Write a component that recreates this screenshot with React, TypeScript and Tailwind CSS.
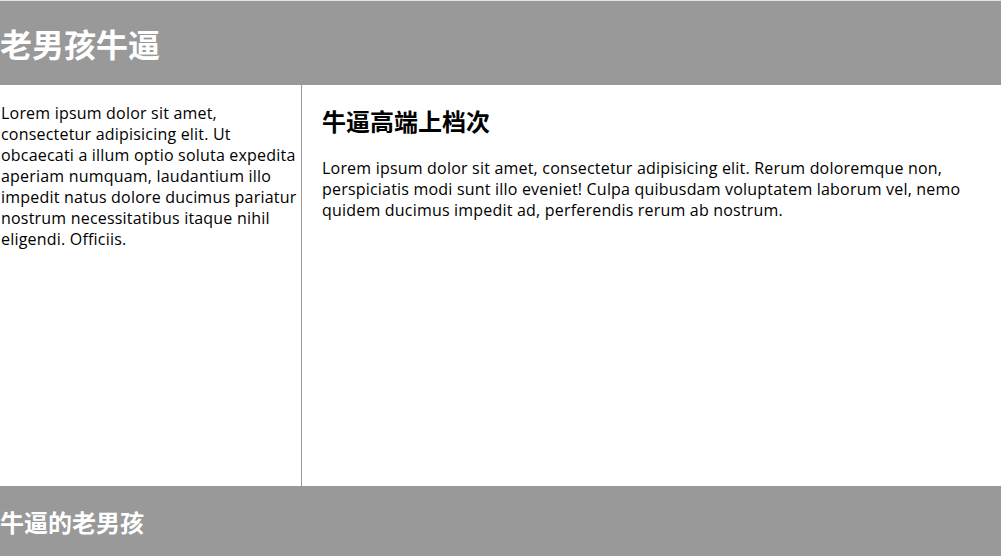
import React from "react";

export default function App() {
  const font = { fontFamily: '"Open Sans", "Noto Sans CJK SC", sans-serif' };
  return (
    <div className="w-[1001px] h-[556px] overflow-hidden bg-white text-black border-t border-[#e6e6e6]" style={font}>
      <header className="bg-[#999999] text-white h-[84px] flex items-center">
        <h1 className="text-[32px] leading-[42px] font-bold" style={{ fontFamily: '"Noto Sans CJK SC", sans-serif' }}>老男孩牛逼</h1>
      </header>
      <div className="flex h-[401px]">
        <aside className="w-[302px] shrink-0 border-r border-[#999999] pl-[1px] pt-4">
          <p className="text-[16px] leading-[21px] tracking-[0.2px] pt-[2px]">
            Lorem ipsum dolor sit amet, consectetur adipisicing elit. Ut obcaecati a illum optio soluta expedita aperiam numquam, laudantium illo impedit natus dolore ducimus pariatur nostrum necessitatibus itaque nihil eligendi. Officiis.
          </p>
        </aside>
        <main className="flex-1 px-5 pt-5">
          <h2 className="text-[24px] leading-[32px] font-bold" style={{ fontFamily: '"Noto Sans CJK SC", sans-serif' }}>牛逼高端上档次</h2>
          <p className="mt-5 text-[16px] leading-[21px] tracking-[0.2px] pt-[1px]">
            Lorem ipsum dolor sit amet, consectetur adipisicing elit. Rerum doloremque non, perspiciatis modi sunt illo eveniet! Culpa quibusdam voluptatem laborum vel, nemo quidem ducimus impedit ad, perferendis rerum ab nostrum.
          </p>
        </main>
      </div>
      <footer className="bg-[#999999] text-white h-[72px] pt-5">
        <h2 className="text-[24px] leading-[32px] font-bold" style={{ fontFamily: '"Noto Sans CJK SC", sans-serif' }}>牛逼的老男孩</h2>
      </footer>
    </div>
  );
}
